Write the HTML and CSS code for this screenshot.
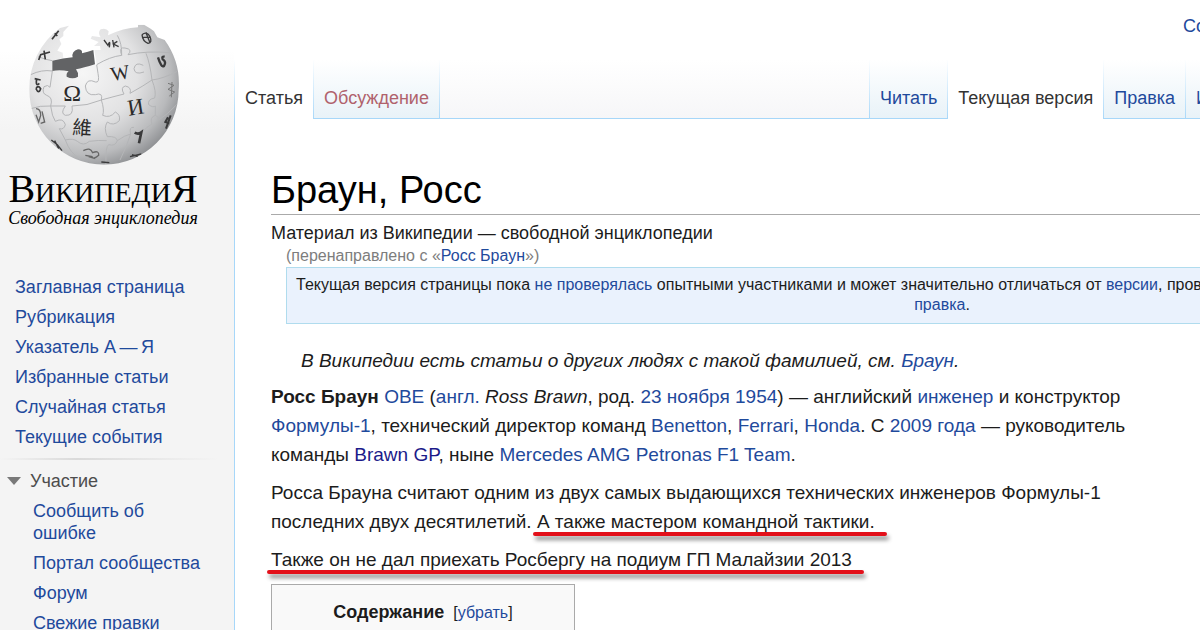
FILE: index.html
```html
<!DOCTYPE html>
<html lang="ru">
<head>
    <meta charset="UTF-8">
    <meta name="viewport" content="width=device-width, initial-scale=1.0">
    <title>Браун, Росс — Википедия</title>
    <link rel="stylesheet" href="styles.css">
</head>
<body>

<div class="page">
    <aside class="sidebar">
        <a class="logo" href="#">
            <svg class="globe" viewBox="0 0 720 510" aria-hidden="true">
                <defs>
                    <radialGradient id="ball" cx="0.36" cy="0.36" r="0.7">
                        <stop offset="0" stop-color="#f6f6f6"/>
                        <stop offset="0.5" stop-color="#e2e2e3"/>
                        <stop offset="0.8" stop-color="#b9babc"/>
                        <stop offset="1" stop-color="#85878a"/>
                    </radialGradient>
                    <clipPath id="edge">
                        <path d="M207 77 L190 96 L190 108 L178 118 L184 132 L172 152 L188 158 L190 174 L157 182 L157 212 L290 194 L283 150 L302 150 L300 138 L282 138 L296 126 L272 116 L276 108 L302 112 Q292 98 302 88 Q318 82 326 94 L324 106 Q370 84 414 82 L414 74 L432 74 L452 86 L462 94 L472 112 L494 120 A224 224 0 0 1 536 270 A224 224 0 0 1 312 494 A224 224 0 0 1 88 270 A224 224 0 0 1 180 84 Z"/>
                    </clipPath>
                </defs>
                <g clip-path="url(#edge)">
                    <rect x="80" y="60" width="470" height="440" fill="url(#ball)"/>
                    <g fill="none" stroke="#b4b5b7" stroke-width="3">
                        <path d="M92 224 Q125 208 157 213 M290 194 Q330 170 365 166 Q355 140 375 144 Q400 148 384 164 Q440 152 510 158"/>
                        <path d="M92 326 Q120 316 152 318 Q160 292 140 286 Q124 280 132 260 Q144 252 150 262 L157 213"/>
                        <path d="M152 318 L196 318 Q180 340 196 346 Q222 348 216 318 Q262 318 304 300 Q310 276 286 284 Q258 288 256 258 Q262 234 286 246 Q300 250 294 220 L290 194"/>
                        <path d="M304 300 Q340 290 372 282 Q360 262 376 258 Q396 262 390 280 Q430 258 456 240 Q490 236 532 214"/>
                        <path d="M304 300 Q314 330 308 346 Q330 356 346 336 Q362 344 358 362 Q340 380 322 366 Q310 384 322 410 Q350 408 352 422 Q346 440 326 434 Q316 440 318 492"/>
                        <path d="M152 318 Q156 350 166 364 Q190 352 196 374 Q192 390 178 386 L196 420 Q220 414 232 424 Q250 440 268 424 Q296 420 320 422"/>
                        <path d="M352 422 Q374 406 392 402 Q386 380 402 382 M428 396 Q440 380 456 372 Q448 352 466 346 Q478 350 476 360 Q502 344 530 314"/>
                        <path d="M456 240 Q470 276 464 294 Q442 298 446 314 Q460 324 466 318 L466 346"/>
                        <path d="M365 166 Q366 130 352 106 M432 216 Q404 226 402 206 Q406 184 430 196 M438 160 Q450 190 456 240"/>
                        <path d="M114 170 Q140 180 157 182 M196 420 Q210 460 240 476 M392 402 Q380 440 360 480"/>
                    </g>
                    <g class="glyphs">
                        <text x="190" y="303" font-size="72">Ω</text>
                        <text x="336" y="244" font-size="60" transform="rotate(-10 336 244)">W</text>
                        <text x="386" y="347" font-size="68" transform="rotate(-9 386 347)">И</text>
                        <text class="cjk" x="216" y="402" font-size="58" transform="rotate(4 216 402)">維</text>
                    </g>
                    <g fill="none" stroke="#3a3a3b" stroke-width="7">
                        <path d="M404 398 Q414 404 424 397 L417 430" stroke-width="8"/>
                        <path d="M474 172 Q484 204 492 198 Q500 186 488 178 Q484 168 494 170"/>
                        <path d="M312 120 L324 136 Q332 116 328 142 M338 120 L342 142 M352 124 L340 132 L356 140" stroke-width="4"/>
                        <path d="M426 104 Q440 92 450 110 Q458 128 444 130 Q428 124 426 104 M438 98 L450 128 M430 112 L450 112" stroke-width="4"/>
                        <path d="M116 180 L122 164 L150 156 M132 152 L136 178 M156 118 L176 92 M164 100 L172 108" stroke-width="5"/>
                        <path d="M104 236 L122 240 M110 236 Q106 262 118 250 M108 266 Q116 284 122 266 Q114 254 108 266" stroke-width="5"/>
                        <path d="M108 326 Q122 326 122 346 L116 366 L108 344 M126 334 L134 366 L122 370" stroke-width="4" stroke="#666"/>
                        <path d="M154 420 L172 434 L186 452 M164 422 L176 446" stroke-width="4"/>
                        <path d="M250 452 Q270 440 278 458 Q298 450 296 466 Q280 480 276 470 L256 466 M266 470 L286 476" stroke-width="4" stroke="#666"/>
                        <path d="M504 250 L522 256 L504 268 L524 276 L508 288 M516 246 L514 292" stroke-width="3" stroke="#777"/>
                        <path d="M512 346 L498 386 M504 352 L496 366 L508 370" stroke-width="6"/>
                        <path d="M390 470 L424 462 M396 464 L414 470 M304 486 L328 488" stroke-width="4"/>
                    </g>
                </g>
                <path d="M157 182 Q190 174 218 172 Q214 154 234 148 Q248 148 246 160 Q264 156 280 150 L285 193 Q250 204 228 208 Q236 218 234 230 Q218 240 200 230 Q198 220 206 214 Q180 208 157 213 Z" fill="#626365"/>
            </svg>
            <span class="wordmark">ВикипедиЯ</span>
            <span class="tagline">Свободная энциклопедия</span>
        </a>

        <nav class="menu">
            <ul>
                <li><a href="#">Заглавная страница</a></li>
                <li><a href="#">Рубрикация</a></li>
                <li><a href="#">Указатель А&thinsp;—&thinsp;Я</a></li>
                <li><a href="#">Избранные статьи</a></li>
                <li><a href="#">Случайная статья</a></li>
                <li><a href="#">Текущие события</a></li>
            </ul>
        </nav>

        <nav class="menu portal">
            <h2><button type="button">Участие</button></h2>
            <ul>
                <li><a href="#">Сообщить об ошибке</a></li>
                <li><a href="#">Портал сообщества</a></li>
                <li><a href="#">Форум</a></li>
                <li><a href="#">Свежие правки</a></li>
            </ul>
        </nav>
    </aside>

    <div class="main">
        <div class="personal"><a href="#">Создать учётную запись</a></div>

        <header class="tabs">
            <nav class="tab-group">
                <a class="current" href="#">Статья</a>
                <a class="new" href="#">Обсуждение</a>
            </nav>
            <nav class="tab-group views">
                <a href="#">Читать</a>
                <a class="current" href="#">Текущая версия</a>
                <a href="#">Правка</a>
                <a class="last" href="#">История</a>
            </nav>
        </header>

        <main class="content">
            <h1>Браун, Росс</h1>
            <div class="site-sub">Материал из Википедии — свободной энциклопедии</div>
            <div class="redirect">(перенаправлено с «<a href="#">Росс Браун</a>»)</div>
            <div class="notice">
                Текущая версия страницы пока <a href="#">не проверялась</a> опытными участниками и может значительно отличаться от <a href="#">версии</a>, проверенной 24 сентября 2012 года; проверки требует <a href="#">1<br>правка</a>.
            </div>

            <p class="hatnote">В Википедии есть статьи о других людях с такой фамилией, см. <a href="#">Браун</a>.</p>

            <p><b>Росс Браун</b> <a href="#">OBE</a> (<a href="#">англ.</a> <i>Ross Brawn</i>, род. <a href="#">23 ноября</a> <a href="#">1954</a>) — английский <a href="#">инженер</a> и конструктор <a href="#">Формулы-1</a>, технический директор команд <a href="#">Benetton</a>, <a href="#">Ferrari</a>, <a href="#">Honda</a>. С <a href="#">2009 года</a> — руководитель команды <a class="visited" href="#">Brawn GP</a>, ныне <a href="#">Mercedes AMG Petronas F1 Team</a>.</p>

            <p>Росса Брауна считают одним из двух самых выдающихся технических инженеров Формулы-1 последних двух десятилетий. <span class="marked">А также мастером командной тактики.</span></p>

            <p><span class="marked">Также он не дал приехать Росбергу на подиум ГП Малайзии 2013</span></p>

            <section class="toc">
                <h2>Содержание</h2>
                <span>[<a href="#">убрать</a>]</span>
            </section>
        </main>
    </div>
</div>

</body>
</html>
```
FILE: styles.css
```css
body {
    margin: 0;
    font-family: "Liberation Sans", Arial, sans-serif;
    font-size: 19px;
    color: #1c1c1c;
    background: #fff;
}

a {
    color: #1f4a9c;
    text-decoration: none;
}

a:hover {
    text-decoration: underline;
}

ul {
    list-style: none;
    margin: 0;
    padding: 0;
}

.page {
    display: grid;
    grid-template-columns: 234px minmax(0, 1fr);
    height: 100vh;
    overflow: hidden;
}

/* sidebar */

.sidebar {
    background: linear-gradient(#fff 50px, #f4f4f4 130px);
}

.logo {
    display: flex;
    flex-direction: column;
    width: 206px;
    height: 272px;
    color: #000;
    text-align: center;
    font-family: "Liberation Serif", "Times New Roman", serif;
}

.logo:hover {
    text-decoration: none;
}

.globe {
    width: 240px;
    height: 170px;
}

.glyphs {
    fill: #2b2b2b;
    font-family: "Liberation Serif", serif;
}

.cjk {
    font-family: "Noto Sans CJK TC", sans-serif;
}

.wordmark {
    font-size: 40px;
    line-height: 38px;
    font-variant: small-caps;
}

.tagline {
    font-size: 18px;
    line-height: 20px;
    font-style: italic;
}

.menu {
    padding-left: 15px;
    font-size: 18px;
    line-height: 22px;
}

.menu li {
    padding: 4px 0;
}

.portal {
    width: 170px;
    margin-top: 6px;
    padding: 8px 16px 0 33px;
    background: linear-gradient(to right, #f4f4f4, #dadada 35%, #f4f4f4) top / 100% 2px no-repeat;
}

.portal h2 {
    margin: 0 0 0 -26px;
    padding: 4px 0;
    font-size: 18px;
    font-weight: normal;
    line-height: 22px;
}

.portal button {
    display: flex;
    align-items: center;
    gap: 9px;
    padding: 0;
    border: 0;
    background: none;
    color: #4d4d4d;
    font: inherit;
}

.portal button::before {
    content: "";
    border: 7px solid transparent;
    border-top: 8px solid #797979;
    border-bottom: 0;
}

/* top bar */

.main {
    border-left: 1px solid;
    border-image: linear-gradient(#fff 60px, #a7d7f9 120px) 1;
}

.personal {
    display: flex;
    justify-content: flex-end;
    height: 44px;
    padding-top: 16px;
    font-size: 18px;
    line-height: 20px;
}

.personal a {
    width: 17px;
    white-space: nowrap;
}

.tabs {
    display: flex;
    justify-content: space-between;
    font-size: 18px;
    line-height: 22px;
    background: linear-gradient(#fff, #f6f6f8);
    box-shadow: inset 0 -1px #a7d7f9;
}

.tab-group {
    display: flex;
}

.tab-group a {
    padding: 27px 10px 10px;
    border-right: 1px solid;
    border-image: linear-gradient(#fff, #a7d7f9) 1;
    background: linear-gradient(#fff, #e8f2f8);
    box-shadow: inset 0 -1px #a7d7f9;
    white-space: nowrap;
}

.tab-group .current {
    background: #fff;
    box-shadow: none;
    color: #333;
}

.tab-group .new {
    color: #b0626c;
}

.views {
    border-left: 1px solid;
    border-image: linear-gradient(#fff, #a7d7f9) 1;
}

.tab-group .last {
    width: 4px;
    padding-right: 0;
    border-right: 0;
}

/* article */

.content {
    padding: 48px 0 0 36px;
}

h1 {
    margin: 0 0 6px;
    border-bottom: 1px solid #aaa;
    font-size: 38px;
    font-weight: normal;
    line-height: 47px;
    color: #000;
}

.site-sub {
    font-size: 18px;
    line-height: 24px;
}

.redirect {
    margin-left: 15px;
    font-size: 16px;
    line-height: 22px;
    color: #7d7d7d;
}

.notice {
    width: max-content;
    margin-left: 15px;
    padding: 7px 9px 8px;
    border: 1px solid #b0dcee;
    background: #eaf2fd;
    font-size: 16px;
    line-height: 20px;
    text-align: center;
    white-space: nowrap;
}

.content p {
    margin: 0 0 9px;
    padding-right: 32px;
    line-height: 29px;
}

.content .hatnote {
    margin: 22px 0 7px 30px;
    font-style: italic;
}

.content .visited {
    color: #1b1b8a;
}

/* red marker line drawn over the text */
.marked {
    position: relative;
}

.marked::after {
    content: "";
    position: absolute;
    left: -4px;
    right: -12px;
    bottom: -4px;
    height: 4px;
    border-radius: 2px;
    background: #e3101a;
    box-shadow: 2px 4px 4px rgba(0, 0, 0, 0.45);
}

.toc {
    display: flex;
    justify-content: center;
    align-items: baseline;
    gap: 9px;
    width: 304px;
    height: 80px;
    margin-top: 10px;
    padding-top: 16px;
    box-sizing: border-box;
    border: 1px solid #aaa;
    background: #f9f9f9;
    font-size: 16px;
}

.toc h2 {
    margin: 0;
    font-size: 18px;
    line-height: 22px;
}
```
